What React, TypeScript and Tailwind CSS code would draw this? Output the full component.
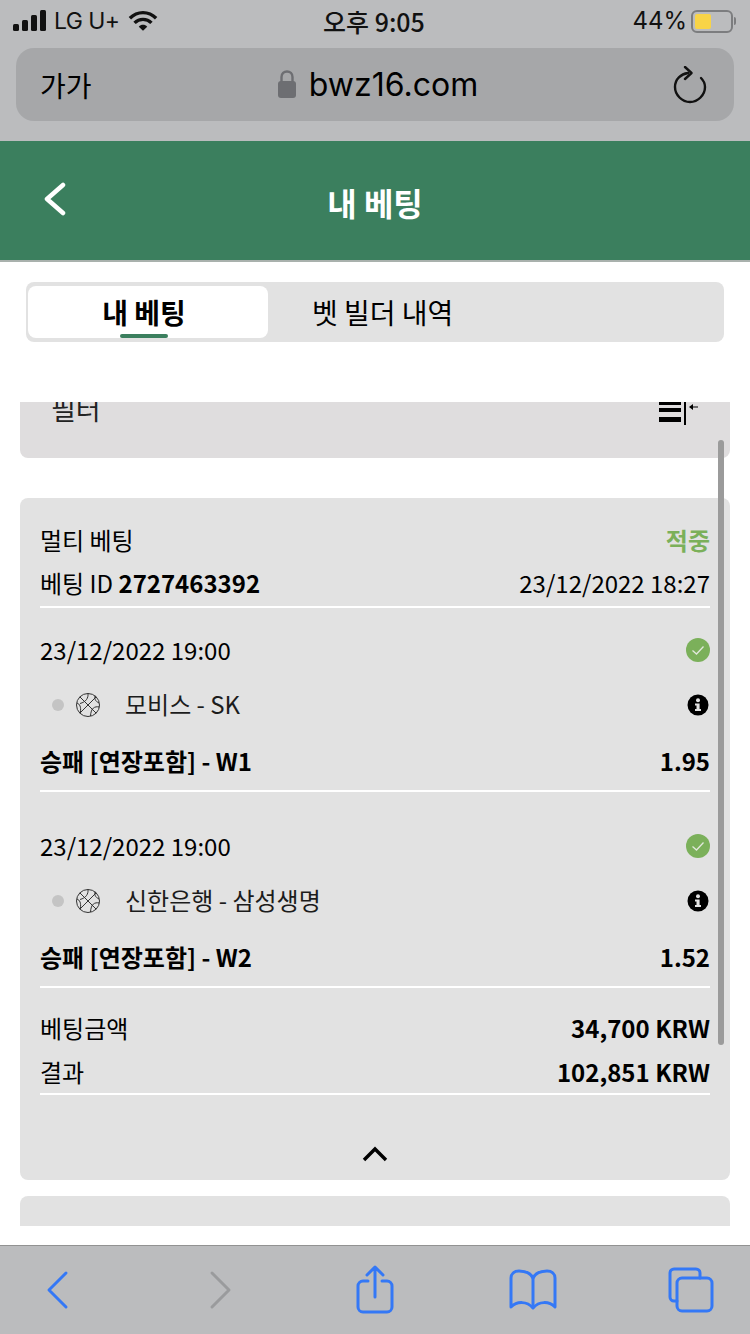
const cjk = "font-['Noto_Sans_CJK_KR','Noto_Sans',sans-serif]";

function Basketball() {
  return (
    <svg width="26" height="26" viewBox="0 0 26 26" fill="none" stroke="#333" strokeWidth="1">
      <circle cx="13" cy="13" r="11.5" />
      <path d="M4.8 4.8 L21.2 21.2 M21.2 4.8 L4.8 21.2" />
      <path d="M13 1.5 C13.5 6 11 10 5 11.5 M1.8 11 C5 12 6 15 5.5 20" />
      <path d="M24.5 15 C19.5 14 16 16 15.5 24 M20 3.5 C19.5 7 20 9 24 11" />
    </svg>
  );
}

function CheckBadge() {
  return (
    <svg width="24" height="24" viewBox="0 0 24 24" fill="none">
      <circle cx="12" cy="12" r="12" fill="#7bb05a" />
      <path d="M6.5 12.5 L10.5 16 L17.5 8.5" stroke="#e2e8dc" strokeWidth="1.3" />
    </svg>
  );
}

function InfoBadge() {
  return (
    <svg width="22" height="22" viewBox="0 0 22 22">
      <circle cx="11" cy="11" r="10.5" fill="#000" />
      <circle cx="11" cy="6.2" r="2" fill="#e2e2e2" />
      <path d="M8 9.5 H12.6 V15 H14 V17 H8 V15 H9.5 V11.5 H8 Z" fill="#e2e2e2" />
    </svg>
  );
}

function Leg({ team, market, odds }: { team: string; market: string; odds: string }) {
  return (
    <div className="border-b-2 border-white">
      <div className="flex h-[56px] items-center justify-between">
        <span>23/12/2022 19:00</span>
        <CheckBadge />
      </div>
      <div className="flex h-[54px] items-center justify-between pr-px">
        <div className="flex items-center">
          <span className="ml-3 h-3 w-3 rounded-full bg-[#c4c4c4]" />
          <span className="ml-[11px]"><Basketball /></span>
          <span className="ml-[24px] -mt-[2px] text-[#1c1c1c]">{team}</span>
        </div>
        <InfoBadge />
      </div>
      <div className="flex h-[58px] items-center justify-between pt-[1px] pb-[1px] font-bold">
        <span>{market}</span>
        <span>{odds}</span>
      </div>
    </div>
  );
}

export default function App() {
  return (
    <div className={`relative h-[1334px] w-[750px] overflow-hidden bg-white text-black ${cjk}`}>
      {/* safari chrome */}
      <div className="h-[141px] bg-[#bbbcbe]">
        <div className="relative flex h-[42px] items-center justify-between pl-[13px] pr-[14px] font-['Inter',sans-serif] text-[#111]">
          <div className="flex items-center">
            <svg width="34" height="22" viewBox="0 0 34 22" fill="#111">
              <rect x="0" y="14" width="6" height="7" rx="1.5" />
              <rect x="9" y="10" width="6" height="11" rx="1.5" />
              <rect x="18" y="5" width="6" height="16" rx="1.5" />
              <rect x="27" y="0" width="6" height="21" rx="1.5" />
            </svg>
            <span className="ml-[7px] text-[23px] tracking-tight">LG U+</span>
            <svg className="ml-[9px]" width="30" height="24" viewBox="0 0 32 24" fill="none" stroke="#111" strokeWidth="3.6">
              <path d="M2 9 C10 1 22 1 30 9" />
              <path d="M7 14 C12 9 20 9 25 14" />
              <path d="M16 22.5 L11.5 18 C14 15.5 18 15.5 20.5 18 Z" fill="#111" strokeWidth="0" />
            </svg>
          </div>
          <span className={`absolute left-[323px] top-[3px] ${cjk} text-[25px] font-medium leading-[36px]`}>오후 9:05</span>
          <div className="flex items-center">
            <span className="mr-[4px] text-[24px]">44%</span>
            <div className="h-[23px] w-[42px] rounded-[6px] border-2 border-[#7c7d7f] p-[2px]">
              <div className="h-full w-[16px] rounded-[2px] bg-[#f8d447]" />
            </div>
            <div className="ml-px h-2 w-[2px] rounded-r bg-[#7c7d7f]" />
          </div>
        </div>
        <div className="mx-4 mt-[6px] flex h-[73px] items-center justify-between rounded-[18px] bg-[#a6a7a9] pl-[24px] pr-[27px]">
          <span className="w-[60px] text-[28px] leading-none">가가</span>
          <div className="-ml-[18px] flex items-center">
            <svg width="20" height="29" viewBox="0 0 20 29" fill="none">
              <path d="M4.5 13 V7 C4.5 3.5 7 1.5 10 1.5 C13 1.5 15.5 3.5 15.5 7 V13" stroke="#6d6e72" strokeWidth="2.4" />
              <rect x="1" y="11" width="18" height="17" rx="3" fill="#6d6e72" />
            </svg>
            <span className="ml-[12px] font-['Inter',sans-serif] text-[32px] leading-none">bwz16.com</span>
          </div>
          <svg width="34" height="38" viewBox="0 0 34 38" fill="none" stroke="#111" strokeWidth="2.4" strokeLinecap="round" strokeLinejoin="round">
            <path d="M15 7 C8 8 2 13 2 21 C2 29 9 36 17 36 C25 36 32 29 32 21 C32 17 30 14 28 12" />
            <path d="M12 1 L18.5 7 L12 13" />
          </svg>
        </div>
      </div>

      {/* page header */}
      <div className="flex h-[121px] items-center justify-center border-b-2 border-[#a9b1ad] bg-[#3b7f5e]">
        <svg className="absolute left-[43px] top-[182px]" width="24" height="36" viewBox="0 0 24 36" fill="none" stroke="#fff" strokeWidth="4.5" strokeLinecap="round" strokeLinejoin="round">
          <path d="M20 3 L4 17 L20 31" />
        </svg>
        <span className="mt-[3px] text-[32px] font-bold text-white">내 베팅</span>
      </div>

      {/* tabs */}
      <div className="mx-[26px] mt-[20px] flex h-[60px] rounded-lg bg-[#e2e2e2] py-[4px] pl-[2px] text-[28px]">
        <div className="relative flex w-[240px] items-center justify-center rounded-lg bg-white pr-[8px] font-bold">
          <span>내 베팅</span>
          <div className="absolute bottom-0 left-[92px] h-[4px] w-[48px] rounded-sm bg-[#3b7f5e]" />
        </div>
        <div className="ml-[44px] flex items-center">벳 빌더 내역</div>
      </div>

      {/* list */}
      <div className="mx-[20px] mt-[60px] h-[824px] overflow-hidden text-[24px] leading-none">
        <div className="flex h-[56px] items-start justify-between rounded-b-lg bg-[#dfddde] pl-[31px] pr-[32px]">
          <span className="-mt-[8px] text-[27px] leading-[30px] text-[#222]">필터</span>
          <svg width="39" height="23" viewBox="0 0 39 23" fill="#000">
            <rect x="0" y="0" width="22" height="3" />
            <rect x="0" y="6" width="22" height="4" />
            <rect x="0" y="15" width="22" height="5" />
            <rect x="25" y="0" width="2" height="23" />
            <path d="M30 5 L34 2 V4.4 H39 V5.6 H34 V8 Z" />
          </svg>
        </div>

        <div className="mt-[40px] rounded-lg bg-[#e2e2e2] px-5 pt-[20px]">
          <div className="flex h-[44px] items-center justify-between">
            <span>멀티 베팅</span>
            <span className="font-bold text-[#7bb05a]">적중</span>
          </div>
          <div className="flex h-[46px] items-center justify-between border-b-2 border-white pb-[2px]">
            <span>베팅 ID <b>2727463392</b></span>
            <span>23/12/2022 18:27</span>
          </div>
          <div className="h-[14px]" />
          <Leg team="모비스 - SK" market="승패 [연장포함] - W1" odds="1.95" />
          <div className="h-[26px]" />
          <Leg team="신한은행 - 삼성생명" market="승패 [연장포함] - W2" odds="1.52" />
          <div className="mt-[20px] flex h-[40px] items-center justify-between">
            <span>베팅금액</span>
            <b>34,700 KRW</b>
          </div>
          <div className="mt-[3px] flex h-[44px] items-center justify-between border-b-2 border-white">
            <span>결과</span>
            <b>102,851 KRW</b>
          </div>
          <div className="flex h-[85px] items-center justify-center pt-[32px]">
            <svg width="26" height="16" viewBox="0 0 26 16" fill="none" stroke="#000" strokeWidth="3.4">
              <path d="M2 14 L13 3 L24 14" />
            </svg>
          </div>
        </div>

        <div className="mt-[16px] h-[60px] rounded-lg bg-[#e2e2e2]" />
      </div>

      {/* overlay scrollbar */}
      <div className="absolute left-[718px] top-[440px] h-[605px] w-[6px] rounded-full bg-[#9b9b9b]" />

      {/* safari toolbar */}
      <div className="absolute bottom-0 left-0 right-0 flex h-[89px] items-center border-t border-[#929292] bg-[#bbbcbe] pl-[46px] pb-[1px]">
        <svg width="24" height="40" viewBox="0 0 24 40" fill="none" stroke="#3478f6" strokeWidth="3" strokeLinecap="round" strokeLinejoin="round">
          <path d="M20 3 L3 20 L20 37" />
        </svg>
        <svg className="ml-[139px]" width="24" height="40" viewBox="0 0 24 40" fill="none" stroke="#9a9b9d" strokeWidth="3" strokeLinecap="round" strokeLinejoin="round">
          <path d="M3 3 L20 20 L3 37" />
        </svg>
        <svg className="ml-[123px]" width="38" height="50" viewBox="0 0 38 50" fill="none" stroke="#3478f6" strokeWidth="3" strokeLinecap="round" strokeLinejoin="round">
          <path d="M12 16 H7 A5 5 0 0 0 2 21 V42 A5 5 0 0 0 7 47 H31 A5 5 0 0 0 36 42 V21 A5 5 0 0 0 31 16 H26" />
          <path d="M19 32 V2 M11 10 L19 2 L27 10" />
        </svg>
        <svg className="ml-[115px]" width="48" height="42" viewBox="0 0 48 42" fill="none" stroke="#3478f6" strokeWidth="3" strokeLinecap="round" strokeLinejoin="round">
          <path d="M24 9 C21 3 15 2 10 2 C5 2 2 5 2 9 V38 C8 32 18 32 24 39 C30 32 40 32 46 38 V9 C46 5 43 2 38 2 C33 2 27 3 24 9 Z" />
          <path d="M24 9 V38" />
        </svg>
        <svg className="ml-[111px]" width="46" height="46" viewBox="0 0 46 46" fill="none" stroke="#3478f6" strokeWidth="3" strokeLinecap="round" strokeLinejoin="round">
          <path d="M24 2 H6 A4 4 0 0 0 2 6 V30 A4 4 0 0 0 6 34 H9 M24 2 H28 A4 4 0 0 1 32 6 V11" />
          <rect x="9" y="11" width="35" height="33" rx="5" />
        </svg>
      </div>
    </div>
  );
}
